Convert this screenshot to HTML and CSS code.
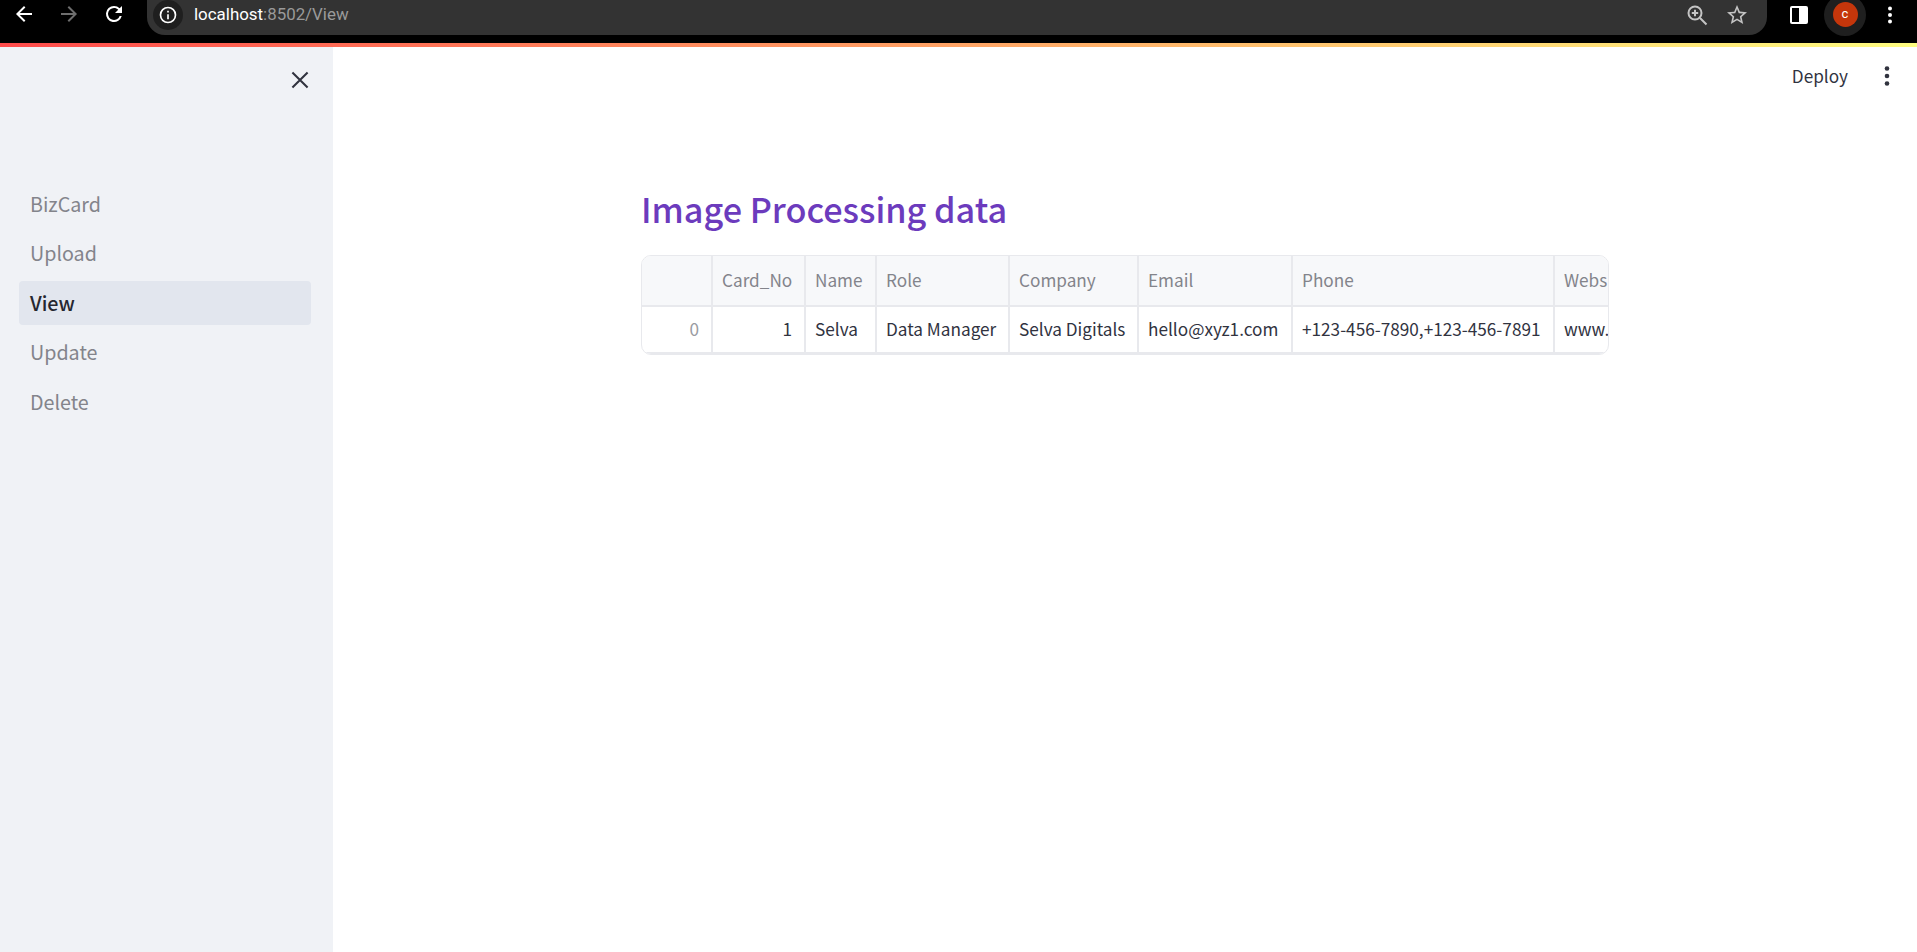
FILE: index.html
```html
<!DOCTYPE html>
<html lang="en">
<head>
	<meta charset="UTF-8">
	<title>View</title>
	<link rel="stylesheet" href="styles.css">
</head>
<body>

	<!-- browser bar -->
	<header class="browser">
		<div class="browser-nav">
			<svg class="icon" viewBox="0 0 24 24"><path d="M20 11H7.8l5.6-5.6L12 4l-8 8 8 8 1.4-1.4L7.8 13H20z"/></svg>
			<svg class="icon off" viewBox="0 0 24 24"><path d="M4 11h12.2l-5.6-5.6L12 4l8 8-8 8-1.4-1.4 5.6-5.6H4z"/></svg>
			<svg class="icon" viewBox="0 0 24 24"><path d="M17.65 6.35A7.96 7.96 0 0 0 12 4a8 8 0 1 0 7.73 10h-2.08A6 6 0 1 1 12 6c1.66 0 3.14.69 4.22 1.78L13 11h7V4z"/></svg>
		</div>
		<div class="address">
			<span class="site-info">
				<svg class="info" viewBox="0 0 24 24"><path d="M11 7h2v2h-2zm0 4h2v6h-2zm1-9a10 10 0 1 0 0 20 10 10 0 0 0 0-20zm0 18a8 8 0 1 1 0-16 8 8 0 0 1 0 16z"/></svg>
			</span>
			<span class="url">localhost<span class="url-rest">:8502/View</span></span>
			<span class="address-end">
				<svg class="zoom" viewBox="0 0 24 24"><circle cx="10" cy="10" r="6.5"/><path d="M15 15l6.5 6.5M10 6.8v6.4M6.8 10h6.4"/></svg>
				<svg class="icon dim" viewBox="0 0 24 24"><path d="M22 9.24l-7.19-.62L12 2 9.19 8.63 2 9.24l5.46 4.73L5.82 21 12 17.27 18.18 21l-1.63-7.03zM12 15.4l-3.76 2.27 1-4.28-3.32-2.88 4.38-.38L12 6.1l1.71 4.04 4.38.38-3.32 2.88 1 4.28z"/></svg>
			</span>
		</div>
		<div class="browser-end">
			<span class="side-panel"><span class="side-panel-fill"></span></span>
			<span class="avatar-ring"><span class="avatar">c</span></span>
			<svg class="icon" viewBox="0 0 24 24"><circle cx="12" cy="5.5" r="2"/><circle cx="12" cy="12" r="2"/><circle cx="12" cy="18.5" r="2"/></svg>
		</div>
	</header>

	<div class="decoration"></div>

	<div class="app">
		<aside class="sidebar">
			<div class="sidebar-top">
				<svg class="close" viewBox="0 0 24 24"><path d="M5 5l14 14M19 5L5 19"/></svg>
			</div>
			<ul class="pages">
				<li><a href="">BizCard</a></li>
				<li><a href="">Upload</a></li>
				<li><a href="" class="active">View</a></li>
				<li><a href="">Update</a></li>
				<li><a href="">Delete</a></li>
			</ul>
		</aside>

		<main class="main">
			<div class="toolbar">
				<span class="deploy">Deploy</span>
				<svg class="menu" viewBox="0 0 24 24"><circle cx="12" cy="4.5" r="2.3"/><circle cx="12" cy="12" r="2.3"/><circle cx="12" cy="19.5" r="2.3"/></svg>
			</div>

			<div class="content">
				<h1>Image Processing data</h1>

				<div class="frame">
					<table>
						<tr>
							<th class="col-index"></th>
							<th class="col-card">Card_No</th>
							<th class="col-name">Name</th>
							<th class="col-role">Role</th>
							<th class="col-company">Company</th>
							<th class="col-email">Email</th>
							<th class="col-phone">Phone</th>
							<th class="col-web">Website</th>
						</tr>
						<tr>
							<td class="index">0</td>
							<td class="num">1</td>
							<td>Selva</td>
							<td>Data Manager</td>
							<td>Selva Digitals</td>
							<td>hello@xyz1.com</td>
							<td>+123-456-7890,+123-456-7891</td>
							<td>www.xyz1.com</td>
						</tr>
					</table>
				</div>
			</div>
		</main>
	</div>

</body>
</html>
```

FILE: styles.css
```css
* {
	margin: 0;
	padding: 0;
	box-sizing: border-box;
}

html, body {
	height: 100%;
	overflow: hidden;
}

body {
	display: flex;
	flex-direction: column;
	font-family: "Noto Sans CJK SC", "Noto Sans", sans-serif;
	color: #31333f;
	background-color: white;
}

/*browser bar*/
.browser {
	display: flex;
	align-items: flex-start;
	height: 43px;
	flex-shrink: 0;
	background-color: #000;
	color: white;
}

.browser-nav {
	display: flex;
	gap: 21px;
	width: 147px;
	padding: 2px 0 0 12px;
	flex-shrink: 0;
}

.icon {
	display: block;
	width: 24px;
	height: 24px;
	fill: white;
	flex-shrink: 0;
}

.icon.off {
	fill: #6e6e6e;
}

.icon.dim {
	fill: #c4c4c4;
}

.zoom {
	display: block;
	width: 24px;
	height: 24px;
	fill: none;
	stroke: #c4c4c4;
	stroke-width: 2;
	flex-shrink: 0;
}

.address {
	display: flex;
	align-items: center;
	width: 1620px;
	height: 35px;
	padding: 0 18px 5px 6px;
	background-color: #333333;
	border-radius: 0 0 18px 18px;
	flex-shrink: 0;
}

.site-info {
	display: flex;
	align-items: center;
	justify-content: center;
	width: 30px;
	height: 30px;
	background-color: #1f1f1f;
	border-radius: 50%;
}

.info {
	width: 20px;
	height: 20px;
	fill: white;
}

.url {
	margin-left: 11px;
	margin-bottom: 2px;
	font-family: "Roboto", sans-serif;
	font-size: 16.9px;
	color: white;
}

.url-rest {
	color: #9a9a9a;
}

.address-end {
	display: flex;
	gap: 16px;
	margin-left: auto;
}

.browser-end {
	display: flex;
	align-items: center;
	height: 29px;
	padding-left: 23px;
}

.side-panel {
	display: block;
	width: 18px;
	height: 18px;
	padding: 2px 9px 2px 2px;
	background-color: white;
	border-radius: 2px;
	margin-right: 16px;
}

.side-panel-fill {
	display: block;
	height: 100%;
	background-color: #000;
}

.avatar-ring {
	display: flex;
	align-items: center;
	justify-content: center;
	width: 42px;
	height: 42px;
	background-color: #1f1f1f;
	border-radius: 50%;
	margin-right: 12px;
}

.avatar {
	display: block;
	width: 25px;
	height: 25px;
	line-height: 24px;
	text-align: center;
	font-family: "Roboto", sans-serif;
	font-size: 13px;
	background-color: #c5360b;
	color: white;
	border-radius: 50%;
}

.decoration {
	height: 4px;
	flex-shrink: 0;
	background-image: linear-gradient(90deg, #ff4b4b, #fffd80);
}

/*isi halaman*/
.app {
	display: flex;
	flex: 1;
	min-height: 0;
}

.sidebar {
	width: 333px;
	flex-shrink: 0;
	background-color: #f0f2f6;
}

.sidebar-top {
	display: flex;
	justify-content: flex-end;
	height: 134.5px;
	padding: 19.5px 20.5px 0 0;
}

.close {
	width: 26px;
	height: 26px;
	fill: none;
	stroke: #31333f;
	stroke-width: 1.9;
}

.pages {
	list-style: none;
	padding: 0 22px 0 19px;
}

.pages li {
	margin-bottom: 5.5px;
}

.pages a {
	display: block;
	height: 44px;
	line-height: 44px;
	padding-left: 11px;
	font-size: 19.7px;
	color: #83848b;
	text-decoration: none;
	border-radius: 4px;
}

.pages a.active {
	background-color: #e2e6ee;
	color: #262730;
	font-weight: 500;
}

.main {
	flex: 1;
	min-width: 0;
}

.toolbar {
	display: flex;
	justify-content: flex-end;
	align-items: center;
	height: 58px;
	padding: 0 18px 0 0;
}

.deploy {
	font-size: 17.2px;
	color: #31333f;
	margin-right: 27px;
	margin-bottom: 2px;
}

.menu {
	width: 24px;
	height: 24px;
	fill: #31333f;
}

.content {
	width: 968px;
	margin-left: 308px;
	padding-top: 78px;
}

h1 {
	font-size: 34.2px;
	font-weight: 500;
	line-height: 50px;
	color: #6c3bbd;
	margin-bottom: 22px;
}

.frame {
	width: 968px;
	height: 100px;
	border: 1px solid #e8e9ed;
	border-radius: 10px;
	overflow: hidden;
}

table {
	border-collapse: collapse;
	table-layout: fixed;
	width: 1100px;
	font-size: 17.2px;
}

th, td {
	padding: 0 10px 1px 9px;
	border-right: 2px solid #e8e9ed;
	border-bottom: 2px solid #e8e9ed;
	text-align: left;
	font-weight: 400;
	white-space: nowrap;
	overflow: hidden;
}

th {
	height: 49.5px;
	background-color: #f7f8fa;
	color: #83848b;
}

td {
	height: 47px;
	color: #31333f;
}

td.num {
	text-align: right;
	padding-right: 12px;
}

td.index {
	text-align: right;
	padding-right: 12px;
	color: #9a9ba1;
}

.col-index { width: 70px; }
.col-card { width: 93px; }
.col-name { width: 71px; }
.col-role { width: 133px; }
.col-company { width: 129px; }
.col-email { width: 154px; }
.col-phone { width: 262px; }
.col-web { width: 188px; }
```
